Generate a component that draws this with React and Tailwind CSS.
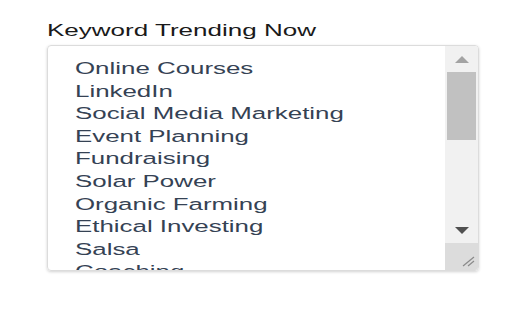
import React from 'react';

const KEYWORDS = [
  'Online Courses',
  'LinkedIn',
  'Social Media Marketing',
  'Event Planning',
  'Fundraising',
  'Solar Power',
  'Organic Farming',
  'Ethical Investing',
  'Salsa',
  'Coaching',
];

// text in the shot is stretched sideways, so glyphs get widened
const wide = 'inline-block origin-left scale-x-[1.55] whitespace-nowrap';

function Arrow({ down, color }) {
  return (
    <svg width="14" height="7" viewBox="0 0 14 7">
      <polygon points={down ? '0,0 14,0 7,7' : '0,7 14,7 7,0'} fill={color} />
    </svg>
  );
}

export default function App() {
  return (
    <div
      className="w-[512px] h-[320px] bg-white pl-[47px] pt-[21px]"
      style={{ fontFamily: '"Liberation Sans", Arial, sans-serif' }}
    >
      <div className="h-[20px] text-[16.8px] leading-[20px] text-[#1a1a1a]">
        <span className={wide}>Keyword Trending Now</span>
      </div>

      <div className="mt-[4px] w-[432px] h-[226px] flex border border-[#dcdcdc] rounded-[4px] shadow-[0_1px_3px_rgba(0,0,0,0.18)] overflow-hidden">
        {/* list */}
        <div className="flex-1 overflow-hidden pl-[27px] pt-[12px]">
          {KEYWORDS.map((k) => (
            <div key={k} className="h-[22.6px] text-[16.7px] leading-[22.6px] text-[#354254]">
              <span className={wide}>{k}</span>
            </div>
          ))}
        </div>

        {/* fake scrollbar */}
        <div className="w-[33px] flex flex-col bg-[#f1f1f1]">
          <div className="h-[26px] flex items-center justify-center">
            <Arrow color="#a3a3a3" />
          </div>
          <div className="h-[68px] mx-[2px] bg-[#c1c1c1]" />
          <div className="flex-1" />
          <div className="h-[26px] flex items-center justify-center">
            <Arrow down color="#505050" />
          </div>
          <div className="h-[27px] bg-[#dcdcdc] flex items-end justify-end p-[3px]">
            <svg width="14" height="12" viewBox="0 0 14 12">
              <line x1="2" y1="11" x2="13" y2="2" stroke="#8a8a8a" strokeWidth="1.2" />
              <line x1="7" y1="11" x2="13" y2="6" stroke="#8a8a8a" strokeWidth="1.2" />
            </svg>
          </div>
        </div>
      </div>
    </div>
  );
}
